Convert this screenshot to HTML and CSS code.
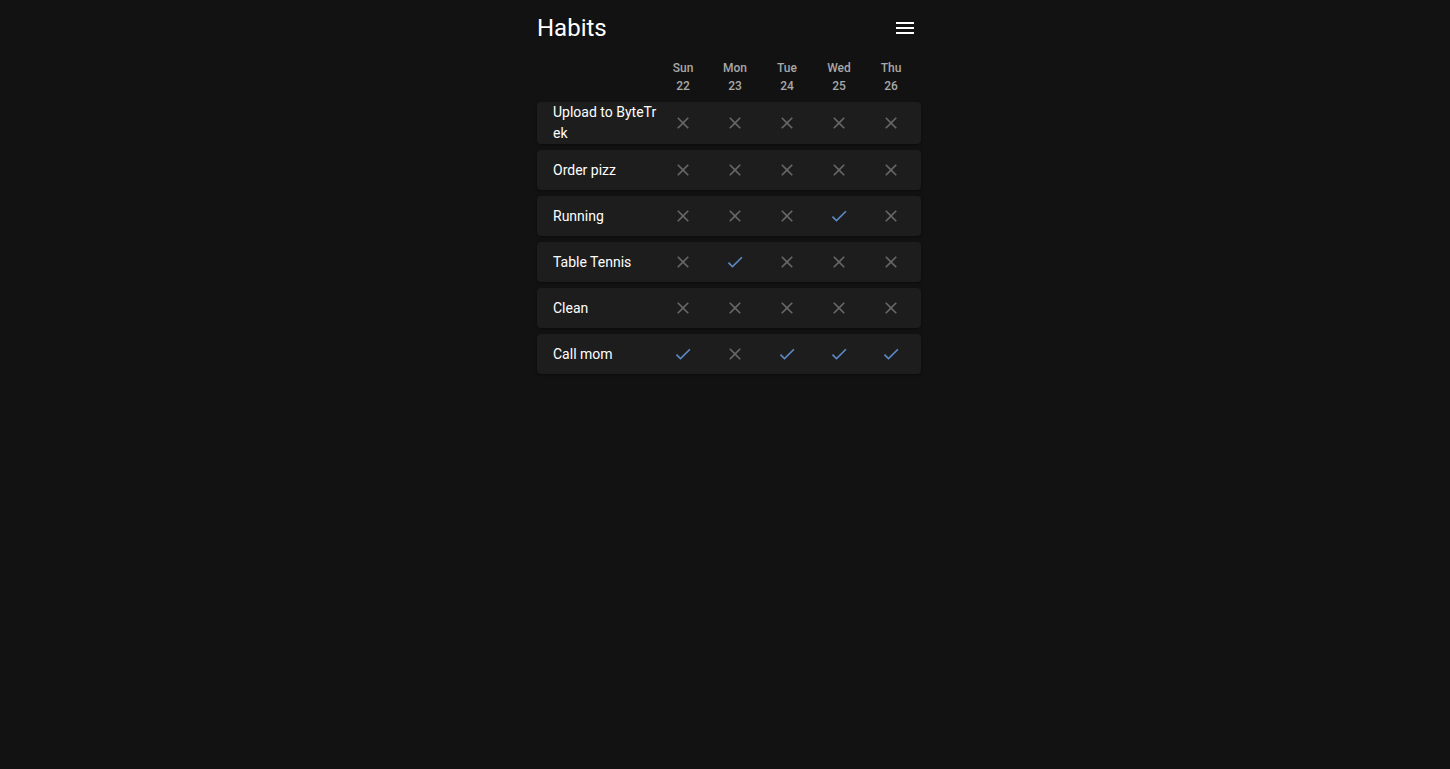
FILE: index.html
```html
<!DOCTYPE html>
<html lang="en">
<head>
    <meta charset="UTF-8">
    <meta name="viewport" content="width=device-width, initial-scale=1.0">
    <title>Habits</title>
    <link rel="stylesheet" href="styles.css">
</head>
<body>
    <div class="container">
        <div class="topbar">
            <h1 class="title">Habits</h1>
            <span class="menu">
                <svg width="24" height="24" viewBox="0 0 24 24"><path fill="#fff" d="M3 18h18v-2H3v2zm0-5h18v-2H3v2zm0-7v2h18V6H3z"/></svg>
            </span>
        </div>

        <div class="days">
            <div class="spacer"></div>
            <div class="day">Sun<br>22</div>
            <div class="day">Mon<br>23</div>
            <div class="day">Tue<br>24</div>
            <div class="day">Wed<br>25</div>
            <div class="day">Thu<br>26</div>
        </div>

        <div id="habits"></div>
    </div>

    <script>
        const habits = [
            { name: "Upload to ByteTrek", done: [0, 0, 0, 0, 0] },
            { name: "Order pizz", done: [0, 0, 0, 0, 0] },
            { name: "Running", done: [0, 0, 0, 1, 0] },
            { name: "Table Tennis", done: [0, 1, 0, 0, 0] },
            { name: "Clean", done: [0, 0, 0, 0, 0] },
            { name: "Call mom", done: [1, 0, 1, 1, 1] }
        ];

        const checkIcon = '<svg width="20" height="20" viewBox="0 0 24 24"><path fill="#5b8ac6" d="M9 16.17L4.83 12l-1.42 1.41L9 19 21 7l-1.41-1.41z"/></svg>';
        const crossIcon = '<svg width="20" height="20" viewBox="0 0 24 24"><path fill="#666" d="M19 6.41L17.59 5 12 10.59 6.41 5 5 6.41 10.59 12 5 17.59 6.41 19 12 13.41 17.59 19 19 17.59 13.41 12z"/></svg>';

        let list = document.getElementById("habits");
        for (let i = 0; i < habits.length; i++) {
            let h = habits[i];
            let html = '<div class="row"><div class="name">' + h.name + '</div>';
            for (let j = 0; j < h.done.length; j++) {
                html += '<div class="cell">' + (h.done[j] ? checkIcon : crossIcon) + '</div>';
            }
            html += '</div>';
            list.innerHTML += html;
        }
    </script>
</body>
</html>
```

FILE: styles.css
```css
body {
    font-family: Roboto, "Liberation Sans", sans-serif;
    background: #121212;
    color: white;
    margin: 0;
    padding: 0 0 0 8px;
}
.container {
    width: 384px;
    margin: 0 auto;
}
.topbar {
    display: flex;
    justify-content: space-between;
    align-items: center;
    height: 40px;
    padding-top: 8px;
    margin-bottom: 11px;
}
.title {
    font-size: 24px;
    font-weight: 400;
    margin: 0;
}
.menu {
    display: flex;
    margin-right: 4px;
}
.days {
    display: flex;
    margin-bottom: 7px;
}
.spacer {
    width: 120px;
}
.day {
    width: 52px;
    text-align: center;
    font-size: 12px;
    font-weight: 500;
    line-height: 18px;
    color: #a8a8a8;
}
.row {
    display: flex;
    align-items: center;
    min-height: 40px;
    margin-bottom: 6px;
    padding-left: 16px;
    background: #1d1d1d;
    border-radius: 4px;
    box-shadow: 0 1px 3px rgba(0, 0, 0, 0.4);
}
.name {
    width: 104px;
    font-size: 14px;
    font-weight: 400;
    line-height: 21px;
    word-break: break-all;
}
.cell {
    width: 52px;
    display: flex;
    justify-content: center;
}
```
